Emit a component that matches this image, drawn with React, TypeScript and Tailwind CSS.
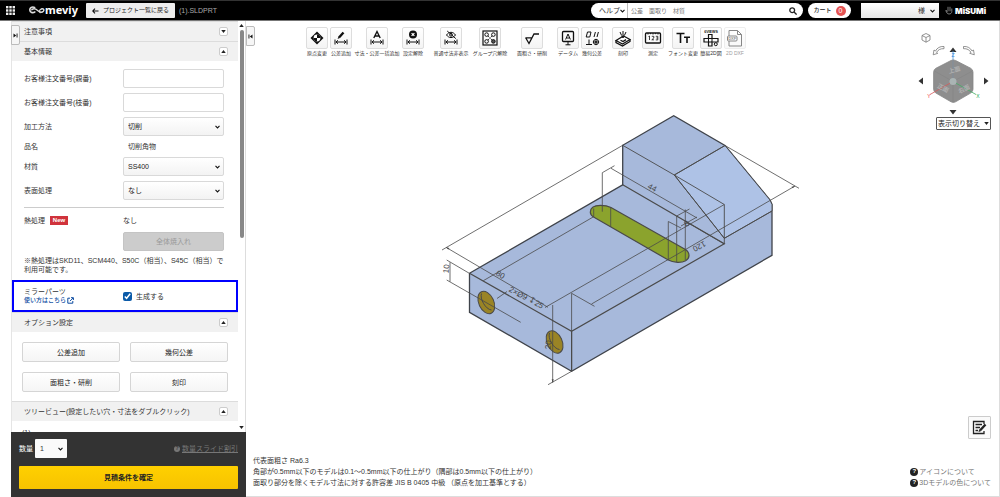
import React, { useState } from "react";

type Tool = { label: string; box: string; icon: React.ReactNode; disabled?: boolean };

const arrows = (
  <>
    <path d="M5 12.5v5M17 12.5v5M6 15h10" />
    <path d="M8 13.3 6 15l2 1.7M14 13.3l2 1.7-2 1.7" />
  </>
);

const tools: Tool[] = [
  {
    label: "原点変更",
    box: "w-6",
    icon: (
      <>
        <path d="M11 4.5 17.5 11 11 17.5 4.5 11z" fill="#111" stroke="none" />
        <circle cx="11" cy="11" r="3.4" fill="#fff" stroke="none" />
        <path d="M11 11V7.6A3.4 3.4 0 0 1 14.4 11zM11 11v3.4A3.4 3.4 0 0 1 7.6 11z" fill="#111" stroke="none" />
      </>
    ),
  },
  {
    label: "公差追加",
    box: "w-6",
    icon: (
      <>
        {arrows}
        <path d="M9 10.5 13.5 5.5" strokeWidth="2.4" />
        <path d="M7.6 12l.8-2.2 1.3 1.2z" fill="#111" stroke="none" />
      </>
    ),
  },
  {
    label: "寸法・公差一括追加",
    box: "w-12",
    icon: (
      <>
        {arrows}
        <path d="M7.8 11 11 4.5l3.2 6.5M9 9h4" strokeWidth="1.4" />
      </>
    ),
  },
  {
    label: "設定解除",
    box: "w-6",
    icon: (
      <>
        {arrows}
        <circle cx="11" cy="7.5" r="4" fill="#111" stroke="none" />
        <path d="M9.6 6.1l2.8 2.8M12.4 6.1 9.6 8.9" stroke="#fff" strokeWidth="1.2" />
      </>
    ),
  },
  {
    label: "普通寸法非表示",
    box: "ml-2 w-9",
    icon: (
      <>
        {arrows}
        <path d="M6.5 8c2.4-3.6 6.6-3.6 9 0-2.4 3.4-6.6 3.4-9 0zM7.2 4l8.6 7.6" />
        <circle cx="11" cy="7.8" r="1.4" />
      </>
    ),
  },
  {
    label: "グループ穴解除",
    box: "w-[42px]",
    icon: (
      <>
        <rect x="4" y="4" width="14" height="14" strokeWidth="1.2" />
        <circle cx="7.6" cy="7.6" r="1.8" />
        <circle cx="14.4" cy="7.6" r="1.8" />
        <circle cx="7.6" cy="14.4" r="1.8" />
        <circle cx="14.4" cy="14.4" r="1.8" fill="#555" />
        <path d="M9.2 9.2l1.2 1.2M12.8 9.2l-1.2 1.2M9.2 12.8l1.2-1.2M12.8 12.8l-1.2-1.2" />
      </>
    ),
  },
  {
    label: "面粗さ・研削",
    box: "ml-px w-10",
    icon: <path d="M4.5 10.5 8 16.5l5-9.5h5M5 10.8h5.8" strokeWidth="1.3" />,
  },
  {
    label: "データム",
    box: "ml-1 w-6",
    icon: (
      <>
        <rect x="5.5" y="4.5" width="11" height="10" rx="1" strokeWidth="1.3" />
        <path d="M8.6 12.5 11 7l2.4 5.5M9.5 11h3M11 14.5V18M8.5 17.8h5" />
      </>
    ),
  },
  {
    label: "幾何公差",
    box: "w-6",
    icon: (
      <>
        <path d="M6.5 5h3.5l-1.2 5H5.2zM13 10l1.4-5M16 10l1.4-5M8 12.5v5M5 17.5h6" />
        <circle cx="15" cy="15" r="2.6" />
        <circle cx="15" cy="15" r="1" />
        <path d="M15 11.8v6.4M11.8 15h6.4" strokeWidth="0.7" />
      </>
    ),
  },
  {
    label: "刻印",
    box: "ml-[3px] w-8",
    icon: (
      <>
        <path d="M4 13.5 11.5 9l6.5 3.5-7.5 4.5z" fill="#fff" strokeWidth="1.2" />
        <path d="M4 13.5v2.2l6.5 3.3 7.5-4.5v-2M8.5 13.2l2.5 1.4 3-2" strokeWidth="1.3" />
        <path d="M11 4v6M8 5l1.4 3M14 5l-1.4 3M9.5 8.5 11 11l1.5-2.5" />
      </>
    ),
  },
  {
    label: "測定",
    box: "w-7",
    icon: (
      <>
        <rect x="3.5" y="6" width="15" height="10" rx="1" strokeWidth="1.3" />
        <path
          d="M6.5 9.5 7.5 9v4M9.8 9.3h2v1.7l-2 1.8h2.2M13.8 9.3h2v3.6h-2M14.3 11h1.5M6 6v1.6M8.5 6v1.2M11 6v1.6M13.5 6v1.2M16 6v1.6"
          strokeWidth="0.8"
        />
      </>
    ),
  },
  {
    label: "フォント変更",
    box: "w-8",
    icon: <path d="M4.5 6.5h8M8.5 6.5v9.5M12 10.3h6M15 10.3V16" strokeWidth="1.6" />,
  },
  {
    label: "簡易2D図",
    box: "w-6",
    icon: (
      <>
        <path d="M8.5 7.5H12v4h6V15h-6v4H8.500v-4H4v-3.500h4.500z" strokeWidth="1.2" />
        <path d="M8.500 11.500H12V15H8.500z" />
        <circle cx="15.800" cy="17.200" r="1.500" />
        <text x="11" y="5.6" textAnchor="middle" fontSize="3.6" fontWeight="700" fill="#111" stroke="none">
          6VIEWS
        </text>
      </>
    ),
  },
  {
    label: "2D DXF",
    box: "w-6",
    disabled: true,
    icon: (
      <>
        <path d="M5 3.5h8.5l4 4V19H5z" />
        <path d="M13.5 3.5v4h4" />
        <rect x="3.5" y="9" width="9.5" height="5" rx="1" fill="#fff" />
        <text x="8.2" y="13" textAnchor="middle" fontSize="4" fontWeight="700" fill="#111" stroke="none">
          DXF
        </text>
      </>
    ),
  },
];

function Caret({ up = false }: { up?: boolean }) {
  return (
    <svg viewBox="0 0 6 4" className="h-[3px] w-[5px]">
      <path d={up ? "M3 0 6 4H0z" : "M0 0h6L3 4z"} fill="#222" />
    </svg>
  );
}

function Chevron({ className }: { className: string }) {
  return (
    <svg viewBox="0 0 6 4" className={`pointer-events-none absolute h-1 w-[5px] ${className}`}>
      <path d="M.6.7 3 3.1 5.4.7" fill="none" stroke="#111" strokeWidth="1.3" />
    </svg>
  );
}

function SectionHeader({ title, open = true }: { title: string; open?: boolean }) {
  return (
    <div className="flex h-5 shrink-0 items-center justify-between border-t border-[#dcdcdc] bg-[#f1f1f1] pr-2.5 pl-3">
      <h2>{title}</h2>
      <button
        aria-label={title}
        className="flex size-[9px] items-center justify-center rounded-[2px] border border-[#ccc] bg-white"
      >
        <Caret up={open} />
      </button>
    </div>
  );
}

function TextRow({ id, label }: { id: string; label: string }) {
  return (
    <div className="flex h-[19px] items-center">
      <label htmlFor={id} className="w-[99px] shrink-0">
        {label}
      </label>
      <input id={id} type="text" className="h-full min-w-0 flex-1 rounded-[2px] border border-[#d9d9d9] bg-white px-1" />
    </div>
  );
}

function SelectRow({ id, label, value }: { id: string; label: string; value: string }) {
  return (
    <div className="flex h-[19px] items-center">
      <label htmlFor={id} className="w-[99px] shrink-0">
        {label}
      </label>
      <div className="relative h-full flex-1">
        <select
          id={id}
          className="h-full w-full appearance-none rounded-[2px] border border-[#d9d9d9] bg-linear-to-b from-white to-[#f3f3f3] px-1 text-[#222]"
        >
          <option>{value}</option>
        </select>
        <Chevron className="top-2 right-1" />
      </div>
    </div>
  );
}

function Header() {
  return (
    <header className="flex h-[21px] shrink-0 items-center border-t border-b border-t-[#333] border-b-[#777] bg-black">
      <button aria-label="メニュー" className="ml-1.5">
        <svg viewBox="0 0 9 9" className="size-[9px]" fill="#eee">
          {[0, 3.3, 6.6].map((y) => [0, 3.3, 6.6].map((x) => <rect key={`${x}-${y}`} x={x} y={y} width="2.4" height="2.4" />))}
        </svg>
      </button>
      <a href="#" className="ml-3.5 flex items-center text-white">
        <svg viewBox="0 0 16 9" className="h-[9px] w-4" fill="none" stroke="#ddd" strokeLinecap="round">
          <path d="M5.6 1.4C3 .3.7 1.8.8 4c.1 2.5 3 3.3 5 2" strokeWidth="1.6" />
          <path d="M2.8 3.8c2-2 4-1 5.8.6s4.200 2.600 5.800.8c1.200-1.500-.2-3-1.800-2.200" strokeWidth="1.4" />
          <path d="M12.200 3c-1.600.8-2.300 2.300-1 3.600" strokeWidth="1.200" />
        </svg>
        <span className="pb-0.5 font-['Noto_Sans',sans-serif] text-[11px] leading-3 font-bold">meviy</span>
      </a>
      <button className="ml-2 flex h-[15px] w-[89px] shrink-0 items-center justify-center gap-1 rounded-[1px] bg-[#eee] text-[6px] text-[#222]">
        <svg viewBox="0 0 7 6" className="h-1.5 w-[7px]" fill="none" stroke="#111" strokeWidth="1.100">
          <path d="M3 .6.8 3 3 5.400M1 3h5.500" />
        </svg>
        プロジェクト一覧に戻る
      </button>
      <span className="ml-1 text-[7px] text-[#aaa]">(1).SLDPRT</span>

      <form className="ml-auto flex h-[15px] w-[212px] items-center rounded-full bg-white text-[7px]">
        <div className="relative h-full w-[37px] border-r border-[#bbb]">
          <select aria-label="検索対象" className="h-full w-full appearance-none pl-2">
            <option>ヘルプ</option>
          </select>
          <Chevron className="top-1.5 right-0.5" />
        </div>
        <input
          aria-label="検索"
          placeholder="公差　面取り　材質"
          className="h-full min-w-0 flex-1 px-[3px] text-[6px] placeholder:text-[#777]"
        />
        <button type="button" aria-label="検索する" className="mr-1.5">
          <svg viewBox="0 0 8 8" className="size-2" fill="none" stroke="#222" strokeWidth="1.300">
            <circle cx="3.200" cy="3.200" r="2.400" />
            <path d="M5 5l2.600 2.600" />
          </svg>
        </button>
      </form>
      <button className="ml-[5px] flex h-[15px] w-[43px] items-center justify-center gap-1 rounded-full bg-white text-[6px] font-medium text-[#222]">
        カート
        <span className="flex size-2.5 items-center justify-center rounded-full bg-[#e55353] text-[7px] leading-none text-white">0</span>
      </button>
      <div className="relative ml-2.5 h-[15px] w-[78px]">
        <select
          aria-label="ユーザー"
          className="h-full w-full appearance-none bg-linear-to-b from-white to-[#e6e6e6] pr-3.5 text-right text-[7px] [text-align-last:right]"
        >
          <option>様</option>
        </select>
        <Chevron className="top-1.5 right-1" />
      </div>
      <a href="#" className="mr-[15px] ml-1.5 flex w-10 items-center gap-0.5 text-white">
        <svg viewBox="0 0 8 9" className="h-[9px] w-2 shrink-0" fill="none" stroke="#999" strokeWidth=".8">
          <path d="M3 .8v4.500M5 .8v4.500M6.800 2.500v3M1 4.200c0 2 1.300 3.800 3 3.800s2.800-1 2.800-2.500M1 4.200l1.500 2" />
        </svg>
        <span className="font-['Inter',sans-serif] text-[8px] leading-none font-black">MiSUMi</span>
      </a>
    </header>
  );
}

function Sidebar() {
  const [mirror, setMirror] = useState(true);

  return (
    <aside className="relative ml-[11px] flex w-[235px] shrink-0 flex-col border-l border-[#e5e5e5] bg-white">
      <button
        aria-label="パネルを開く"
        className="absolute top-1 -left-px z-10 flex h-5 w-[9px] items-center justify-center rounded-r-[2px] border border-[#bbb] bg-[#f6f6f6]"
      >
        <svg viewBox="0 0 5 5" className="size-[5px]">
          <path d="M.5.5 3.200 2.500.5 4.500zM3.600.5h.9v4h-.9z" fill="#111" />
        </svg>
      </button>

      <div className="flex min-h-0 flex-1">
        <div className="flex min-w-0 flex-1 flex-col overflow-hidden">
          <SectionHeader title="注意事項" open={false} />
          <SectionHeader title="基本情報" />

          <div className="flex flex-col gap-[5px] pt-2 pr-3.5 pl-3">
            <TextRow id="parent-no" label="お客様注文番号(親番)" />
            <TextRow id="branch-no" label="お客様注文番号(枝番)" />
            <SelectRow id="method" label="加工方法" value="切削" />
            <div className="flex h-[11px] items-center">
              <span className="w-[104px]">品名</span>
              <span>切削角物</span>
            </div>
            <SelectRow id="material" label="材質" value="SS400" />
            <SelectRow id="surface" label="表面処理" value="なし" />
            <hr className="mt-0.5 border-[#ccc]" />
            <div className="flex h-3.5 items-center">
              <div className="flex w-[99px] items-center gap-[5px]">
                熱処理
                <span className="flex h-[9px] w-[18px] items-center justify-center bg-[#d0333c] text-[6px] font-bold text-white">New</span>
              </div>
              <span>なし</span>
            </div>
            <button disabled className="ml-[99px] h-[19px] rounded-[2px] border border-[#c4c4c4] bg-[#ccc] text-[#999]">
              全体焼入れ
            </button>
            <p className="leading-[9px]">※熱処理はSKD11、SCM440、S50C（相当）、S45C（相当）で利用可能です。</p>
          </div>

          <div className="mt-1.5 flex h-8 shrink-0 items-center border-2 border-[#0000ff] pl-2.5">
            <div className="w-[99px] leading-2">
              <div>ミラーパーツ</div>
              <a href="#" className="flex items-center gap-px text-[6px] font-medium text-[#0b4aa0]">
                使い方はこちら
                <svg viewBox="0 0 7 7" className="size-[7px]" fill="none" stroke="#0b4aa0" strokeWidth="1">
                  <path d="M3 1.200H.8v5h5V4M4 .7h2.400V3M6.200.9 3 4.100" />
                </svg>
              </a>
            </div>
            <label className="flex items-center gap-1">
              <input
                type="checkbox"
                checked={mirror}
                onChange={(e) => setMirror(e.target.checked)}
                className="size-[9px] accent-[#0b5aa8]"
              />
              生成する
            </label>
          </div>

          <SectionHeader title="オプション設定" />
          <div className="grid grid-cols-2 gap-2.5 px-2.5 pt-2.5 pb-[9px]">
            {["公差追加", "幾何公差", "面粗さ・研削", "刻印"].map((name) => (
              <button key={name} className="h-5 rounded-[2px] border border-[#d5d5d5] bg-linear-to-b from-white to-[#f5f5f5] text-[#222]">
                {name}
              </button>
            ))}
          </div>
          <SectionHeader title="ツリービュー(設定したい穴・寸法をダブルクリック)" />
          <p className="mt-2 shrink-0 pl-2.5 leading-2">(1)</p>
        </div>

        <div className="flex w-2 shrink-0 flex-col items-center border-r border-[#ddd] py-[3px]">
          <Caret up />
          <div className="my-[3px] flex w-1 flex-1 flex-col">
            <div className="h-[53%] rounded-full bg-[#888]" />
          </div>
          <Caret />
        </div>
      </div>

      <div className="-ml-px shrink-0 bg-[#333] px-2 pt-[7px] pb-2">
        <div className="flex h-[19px] items-center">
          <label htmlFor="quantity" className="w-4 whitespace-nowrap text-white">
            数量
          </label>
          <div className="relative h-full w-8">
            <select id="quantity" className="h-full w-full appearance-none rounded-[1px] bg-[#fafafa] pl-[5px]">
              <option>1</option>
            </select>
            <Chevron className="top-2 right-1" />
          </div>
          <a href="#" className="ml-auto flex items-center gap-0.5 text-[#777]">
            <span className="flex size-1.5 items-center justify-center rounded-full bg-[#777] text-[5px] font-bold text-[#333]">?</span>
            <span className="underline">数量スライド割引</span>
          </a>
        </div>
        <button className="mt-2 h-[23px] w-full rounded-[1px] bg-linear-to-b from-[#ffd000] to-[#f7c300] font-bold text-[#222]">
          見積条件を確定
        </button>
      </div>
    </aside>
  );
}

function Model() {
  return (
    <svg viewBox="246 21 753 475" className="absolute inset-0 h-full w-full" fill="none" stroke="#4a4a4a" strokeWidth=".9">
      <path
        d="M469.500 273.300 622.700 184.800V145.300L673.700 115.700 725 145.500 770 200 772 204.500V255.300L571.600 371.300 469.500 312.300z"
        fill="#a7b9db"
        stroke="#3f434a"
        strokeWidth="1.300"
      />
      <path d="M725 145.500 770 200 772 204.500V211L724.300 238.300 674.300 175z" fill="#aec2e6" />
      {/* slot */}
      <path
        d="M590.300 212.300C590.300 207 595 205.300 600.500 205.300 605 205.300 608 206 611 207.500L685 249.300C688 251 689 253 689 255.500 689 260 684 262.500 677.500 262.300 673.500 262 671 261.500 668.300 260L594 217.300C591.500 215.800 590.300 214.500 590.300 212.300z"
        fill="#8ba32d"
        strokeWidth="1.200"
      />
      {/* drilled holes */}
      <g fill="#9a8425" strokeWidth="1">
        <ellipse cx="486.300" cy="302.500" rx="7.500" ry="11.800" transform="rotate(-25 486.300 302.500)" />
        <ellipse cx="554.600" cy="342" rx="7.500" ry="11.800" transform="rotate(-25 554.600 342)" />
        <path d="M481.500 293.500c-2 5 4 16 10 16.500M549.500 333c-2 5 4 16 10 16.500" fill="none" />
      </g>
      {/* edges */}
      <path d="M469.500 273.300 571.600 331.300 724.300 243.800 622.700 184.800M571.600 331.300V371.300" strokeWidth="1.200" />
      <path d="M622.700 145.300 674.300 175 725 145.500M674.300 175 724.300 204.500V243.800M674.300 175 724.300 238.300 772 211" />
      {/* dimension lines */}
      <g strokeWidth=".8">
        <path d="M622.700 145.300 442 250M446 247.300 548 307.300" />
        <path d="M483.300 280.700 593.700 216.700M593.700 208.500V217M610.700 207.500V227" />
        <path d="M450 262.300V281.700M446.700 260 469.300 273.300M446.700 280 520.700 322.300" />
        <path d="M497 298.500 507 291.500" />
        <path d="M552.700 305V382.700M548 384.700 571.600 371.300M545 307.500 724.300 204.500" />
        <path d="M571.600 371.300V293.300L594.500 306.300M591.500 304 795 186M725 145.500 799 188.300" />
        <path d="M602.300 211.700V172.700L614.500 165.700M611 168.300 697 218" />
        <path d="M676.700 262V216L689.500 209M685.300 209.500V260M668.300 260V221.500L681 228M685 221 724.300 244M681 226 697 217" />
      </g>
      <path d="M446 247.300l3.500.7-1.300 1.500zM795 186l-3.500.7 1.200 1.500zM552.700 382.700l-1-3.500h2z" fill="#4a4a4a" stroke="none" />
      <g fill="#444" stroke="none" fontSize="8" textAnchor="middle" fontFamily="Liberation Sans, sans-serif">
        <text transform="translate(499 277) rotate(30)">80</text>
        <text transform="translate(449 269) rotate(-85)">10</text>
        <text transform="translate(525 300) rotate(28)">2×Ø9 ↧25</text>
        <text transform="translate(651 190) rotate(28)">44</text>
        <text transform="translate(698 244) rotate(152)">120</text>
        <text transform="translate(688 226) rotate(-30)">8</text>
        <text transform="translate(551 345) rotate(-85)">20</text>
      </g>
    </svg>
  );
}

function ViewCube() {
  return (
    <div className="absolute top-2 right-2 flex flex-col items-end">
      <svg viewBox="915 29 75 87" className="h-[87px] w-[75px]" fill="none" stroke="#777" strokeWidth=".8">
        <path d="M925 33.500 929 35.500V40L925 42.200 921 40V35.500zM921 35.500 925 37.500 929 35.500M925 37.500V42.200" />
        <path d="M943 46.500c-4-.4-7 1.500-8.500 4.500l-1.500-1-.8 4.800 4.600-1.500-1.300-.9c1.500-2.500 4-4 7.500-3.700z" />
        <path d="M962.500 46.500c4-.4 7 1.500 8.500 4.500l1.500-1 .8 4.800-4.600-1.500 1.300-.9c-1.500-2.500-4-4-7.500-3.700z" />
        <g fill="#333" stroke="none">
          <path d="M952 47.500l3.500 4.500h-7zM952 114.500l3.500-4.500h-7zM917.500 81l4.500-3.500v7zM987.500 81l-4.500-3.500v7z" />
        </g>
        <path d="M952 51v12" stroke="#4a9be0" />
        <path
          d="M950 60.500q2.300-1.200 4.600 0l15 7.700q2.400 1.300 2.400 4v17q0 2.500-2.400 3.900l-15 8.700q-2.300 1.300-4.600 0l-15-8.700q-2.400-1.400-2.400-3.900v-17q0-2.700 2.400-4z"
          fill="#8e8e8e"
          stroke="#858585"
        />
        <path d="M933.500 71 952 81.500 971.500 71M952 81.500V102" stroke="#868686" />
        <path d="M952 60.500v21" stroke="#7891a8" strokeWidth=".6" />
        <path d="M952 81.500 929 94.500" stroke="#d55b5b" />
        <path d="M952 81.500 975 94.500" stroke="#43ad65" />
        <circle cx="952" cy="81.500" r="3.500" fill="#aab4b4" stroke="none" />
        <g fontSize="6" fill="#b0b0b0" stroke="none" textAnchor="middle" fontWeight="700">
          <text transform="translate(954 72) rotate(-15)">上面</text>
          <text transform="translate(941 90) rotate(28)">正面</text>
          <text transform="translate(964 91) rotate(-28)">右面</text>
        </g>
        <g fontSize="5" stroke="none" textAnchor="middle">
          <text x="928" y="98" fill="#e33">
            Y
          </text>
          <text x="977" y="98" fill="#2a5">
            X
          </text>
          <text x="952" y="57" fill="#38d">
            Z
          </text>
        </g>
      </svg>
      <button className="mt-px flex h-[13px] w-[55px] items-center justify-center gap-1 rounded-[1px] border border-[#555] bg-white text-[7px] whitespace-nowrap text-[#222]">
        表示切り替え
        <Caret />
      </button>
    </div>
  );
}

function HelpLink({ text }: { text: string }) {
  return (
    <a href="#" className="flex h-[11px] items-center gap-px text-[#777]">
      <span className="flex size-2 items-center justify-center rounded-full bg-[#222] text-[6px] font-bold text-white">?</span>
      {text}
    </a>
  );
}

function Viewer() {
  return (
    <main className="relative flex min-w-0 flex-1 flex-col justify-between border-r border-b border-[#ddd] bg-white">
      <Model />
      <button
        aria-label="パネルを閉じる"
        className="absolute top-[5px] left-0 flex h-5 w-[9px] items-center justify-center rounded-r-[2px] border border-[#bbb] bg-[#f6f6f6]"
      >
        <svg viewBox="0 0 5 5" className="size-[5px]">
          <path d="M4.500.5 1.800 2.500 4.500 4.500zM.5.5h.9v4H.5z" fill="#111" />
        </svg>
      </button>
      <div className="relative flex pt-1.5 pl-[59px]">
        {tools.map((tool) => (
          <div key={tool.label} className={`flex shrink-0 flex-col items-center ${tool.box} ${tool.disabled ? "opacity-50" : ""}`}>
            <button
              aria-label={tool.label}
              disabled={tool.disabled}
              className="size-[22px] rounded-[2px] border border-[#ddd] bg-linear-to-b from-white to-[#f4f4f4]"
            >
              <svg viewBox="1 1 20 20" className="size-5" fill="none" stroke="#111">
                {tool.icon}
              </svg>
            </button>
            <span className="mt-px text-[5px] leading-[7px] whitespace-nowrap">{tool.label}</span>
          </div>
        ))}
      </div>
      <ViewCube />
      <div className="relative flex items-end justify-between pr-2 pb-2 pl-[7px]">
        <div className="leading-[11px]">
          <p>代表面粗さ Ra6.3</p>
          <p>角部が0.5mm以下のモデルは0.1～0.5mm以下の仕上がり（隅部は0.5mm以下の仕上がり）</p>
          <p>面取り部分を除くモデル寸法に対する許容差 JIS B 0405 中級 （原点を加工基準とする）</p>
        </div>
        <div className="flex flex-col items-start">
          <button
            aria-label="メモ"
            className="mb-[27px] flex size-[23px] items-center justify-center self-end rounded-[1px] border border-[#ccc] bg-[#fafafa]"
          >
            <svg viewBox="0 0 15 15" className="size-[15px]" fill="none" stroke="#222" strokeWidth="1.300">
              <path d="M12 4V1.500H1.500v12H12V11M3.500 4.500H10M3.500 7.500H8M3.500 10.500H6" />
              <path d="M8 10.500 13.500 4.500" strokeWidth="2.400" />
              <path d="M6.500 12l.6-2.400 1.700 1.600z" fill="#222" stroke="none" />
            </svg>
          </button>
          <HelpLink text="アイコンについて" />
          <HelpLink text="3Dモデルの色について" />
        </div>
      </div>
    </main>
  );
}

export default function App() {
  return (
    <div
      lang="ja"
      className="flex h-screen flex-col overflow-hidden bg-white font-['Liberation_Sans','Noto_Sans_CJK_JP',sans-serif] text-[7px] leading-[11px] text-[#333]"
    >
      <Header />
      <div className="flex min-h-0 flex-1">
        <Sidebar />
        <Viewer />
      </div>
    </div>
  );
}
